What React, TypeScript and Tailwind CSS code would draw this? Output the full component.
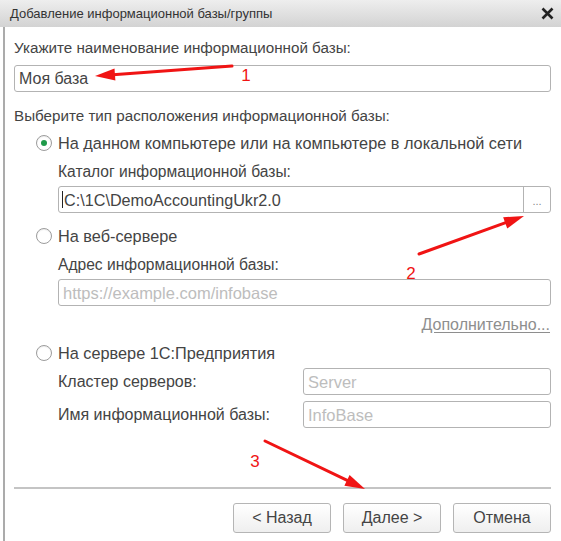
import React from 'react';

// Red annotation arrow drawn over the dialog
const Arrow = ({ x1, y1, x2, y2 }: { x1: number; y1: number; x2: number; y2: number }) => {
  const dx = x2 - x1;
  const dy = y2 - y1;
  const len = Math.hypot(dx, dy);
  const ux = dx / len;
  const uy = dy / len;
  const head = 20;
  const half = 6;
  const bx = x2 - ux * head;
  const by = y2 - uy * head;
  const pts = `${x2},${y2} ${bx - uy * half},${by + ux * half} ${bx + uy * half},${by - ux * half}`;
  return (
    <g>
      <line x1={x1} y1={y1} x2={bx + ux * 2} y2={by + uy * 2} stroke="#f01414" strokeWidth={3} strokeLinecap="round" />
      <polygon points={pts} fill="#f01414" />
    </g>
  );
};

const Radio = ({ checked, label }: { checked?: boolean; label: string }) => (
  <div className="flex items-center h-[20px] pl-[22px]">
    <span className="w-[16px] h-[16px] rounded-full border border-[#9c9c9c] bg-white flex items-center justify-center shadow-[inset_0_1px_1px_rgba(0,0,0,0.08)]">
      {checked && <span className="w-[6px] h-[6px] rounded-full bg-[#1f9a4a]" />}
    </span>
    <span className="ml-[6px] text-[16.3px]">{label}</span>
  </div>
);

const Field = ({ value, placeholder, className = '' }: { value?: string; placeholder?: string; className?: string }) => (
  <div className={`h-[27px] border border-[#b3b3b3] rounded-[3px] bg-white flex items-center pl-[4px] text-[16px] ${className}`}>
    {value ? <span>{value}</span> : <span className="text-[#bdbdbd] text-[16.5px]">{placeholder}</span>}
  </div>
);

const Btn = ({ children }: { children: React.ReactNode }) => (
  <button className="w-[98px] h-[30px] border border-[#b5b5b5] rounded-[3px] bg-gradient-to-b from-white to-[#efefef] text-[16px] text-[#444]">
    {children}
  </button>
);

export default function App() {
  return (
    <div className="relative w-[561px] h-[541px] overflow-hidden bg-white flex flex-col font-['Liberation_Sans',Arial,sans-serif] text-[15.2px] leading-[20px] text-[#444]">
      {/* Title bar */}
      <div className="h-[27px] shrink-0 flex items-center justify-between pl-[10px] pr-[7px] bg-gradient-to-b from-[#eeeeee] to-[#d3d3d3] text-[13px] text-[#333]">
        <span>Добавление информационной базы/группы</span>
        <svg width="13" height="13" viewBox="0 0 13 13">
          <path d="M1.5 1.5 L11.5 11.5 M11.5 1.5 L1.5 11.5" stroke="#222" strokeWidth="2.6" />
        </svg>
      </div>

      {/* Body */}
      <div className="flex-1 ml-[3px] border-l-2 border-[#ababab] pl-[9px] pr-[10px] flex flex-col">
        <div className="mt-[11px]">Укажите наименование информационной базы:</div>
        <Field value="Моя база" className="mt-[7px] h-[26px]" />

        <div className="mt-[14px]">Выберите тип расположения информационной базы:</div>
        <div className="mt-[7px]">
          <Radio checked label="На данном компьютере или на компьютере в локальной сети" />
        </div>
        <div className="pl-[44px] text-[15.6px]">
          <div className="mt-[9px]">Каталог информационной базы:</div>
          <div className="mt-[4px] h-[27px] border border-[#b3b3b3] rounded-[3px] bg-white flex text-[16.2px]">
            <div className="flex-1 flex items-center pl-[3px]">
              <span className="w-px h-[17px] bg-[#222] mr-[1px]" />
              <span>C:\1C\DemoAccountingUkr2.0</span>
            </div>
            <div className="w-[27px] border-l border-[#b3b3b3] flex items-center justify-center text-[11px] text-[#888] pt-[3px]">...</div>
          </div>
        </div>

        <div className="mt-[13px]">
          <Radio label="На веб-сервере" />
        </div>
        <div className="pl-[44px] text-[15.6px]">
          <div className="mt-[9px]">Адрес информационной базы:</div>
          <Field placeholder="https://example.com/infobase" className="mt-[4px] h-[26px]" />
          <div className="mt-[9px] flex justify-end pr-[1px]">
            <span className="text-[16px] text-[#8e8e8e] underline underline-offset-2">Дополнительно...</span>
          </div>
        </div>

        <div className="mt-[8px]">
          <Radio label="На сервере 1С:Предприятия" />
        </div>
        <div className="pl-[44px] text-[16px]">
          <div className="mt-[5px] flex items-center">
            <span className="w-[245px]">Кластер серверов:</span>
            <Field placeholder="Server" className="flex-1" />
          </div>
          <div className="mt-[6px] flex items-center">
            <span className="w-[245px]">Имя информационной базы:</span>
            <Field placeholder="InfoBase" className="flex-1 h-[26px]" />
          </div>
        </div>

        {/* Footer */}
        <div className="mt-auto border-t-2 border-[#c4c4c4]" />
        <div className="mt-[14px] mb-[8px] flex justify-end gap-[12px]">
          <Btn>&lt; Назад</Btn>
          <Btn>Далее &gt;</Btn>
          <Btn>Отмена</Btn>
        </div>
      </div>

      {/* Annotations */}
      <svg className="absolute inset-0 pointer-events-none" width="561" height="541">
        <Arrow x1={232} y1={66} x2={95} y2={76} />
        <Arrow x1={419} y1={254} x2={524} y2={216} />
        <Arrow x1={265} y1={441} x2={365} y2={489} />
        <text x={246} y={81} fill="#f01414" fontSize="17" fontFamily="Liberation Sans, Arial, sans-serif" textAnchor="middle">1</text>
        <text x={411} y={279} fill="#f01414" fontSize="17" fontFamily="Liberation Sans, Arial, sans-serif" textAnchor="middle">2</text>
        <text x={255} y={467} fill="#f01414" fontSize="17" fontFamily="Liberation Sans, Arial, sans-serif" textAnchor="middle">3</text>
      </svg>
    </div>
  );
}
